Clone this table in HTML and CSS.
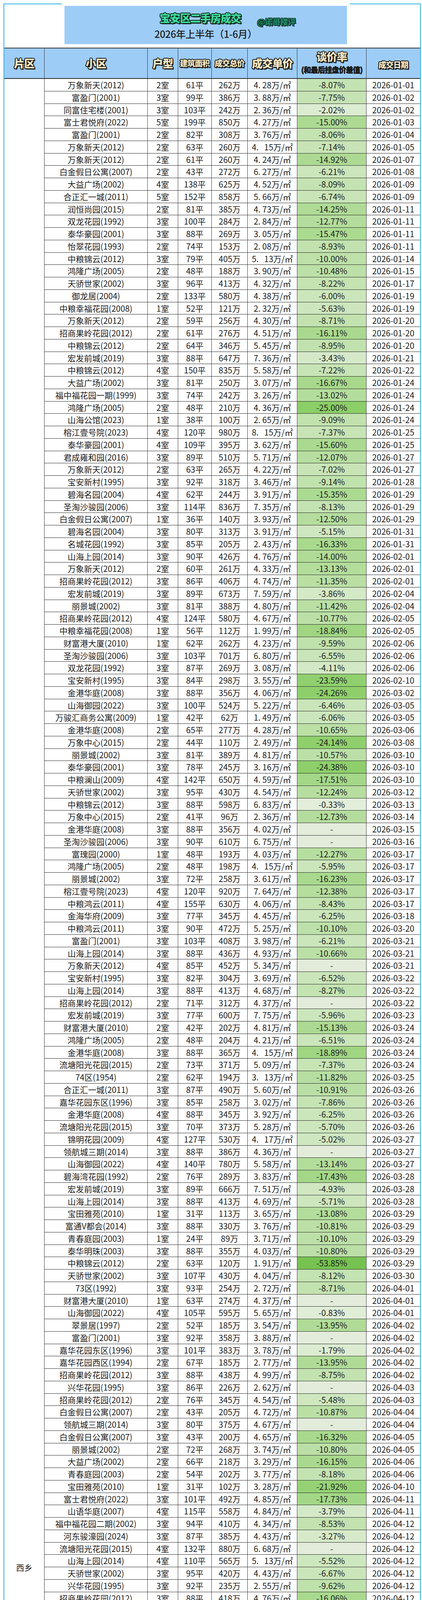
FILE: index.html
```html
<!DOCTYPE html>
<html lang="zh-CN">
<head>
<meta charset="utf-8">
<title>宝安区二手房成交 2026年上半年（1-6月）</title>
<link rel="stylesheet" href="styles.css">
</head>
<body>
<div class="frame">
  <header class="title-area">
    <div class="title-box">
      <div class="title-line">
        <h1 class="main-title">宝安区二手房成交</h1>
        <span class="handle">@诺哥楼评</span>
      </div>
      <div class="period">2026年上半年（1-6月）</div>
    </div>
  </header>
  <table class="sheet">
    <colgroup>
      <col class="c-area">
      <col class="c-name">
      <col class="c-room">
      <col class="c-size">
      <col class="c-total">
      <col class="c-unit">
      <col class="c-rate">
      <col class="c-date">
    </colgroup>
    <thead>
      <tr class="head">
        <th><div class="hc h-big">片区</div></th>
        <th><div class="hc h-big">小区</div></th>
        <th><div class="hc h-big">户型</div></th>
        <th><div class="hc h-small">建筑面积</div></th>
        <th><div class="hc h-small">成交总价</div></th>
        <th><div class="hc h-big">成交单价</div></th>
        <th><div class="hc h-rate"><span class="h-rate-t">谈价率</span><span class="h-note">(和最后挂盘价差值)</span></div></th>
        <th><div class="hc h-small h-date">成交日期</div></th>
      </tr>
    </thead>
    <tbody id="rows"></tbody>
  </table>
</div>
<script src="app.js"></script>
</body>
</html>
```

FILE: styles.css
```css
* { box-sizing: border-box; }

body {
  margin: 0;
  background: #ffffff;
  font-family: "Noto Sans CJK SC", "Noto Sans", "Liberation Sans", sans-serif;
  color: #1c1c1c;
}

.frame {
  margin: 9px 0 0 9px;
  width: 1068px;
  border: 2px solid #2fb3e6;
  background: #ffffff;
}

/* ---------- title ---------- */
.title-area {
  height: 111px;
  padding: 4px 0 0 154px;
}

.title-box {
  width: 723px;
  height: 98px;
  background: #9dcdf7;
  box-shadow: 0 0 0 7px #ffffff;
  padding-top: 13px;
  display: flex;
  flex-direction: column;
  align-items: stretch;
}

.title-line {
  display: flex;
  justify-content: center;
  align-items: flex-end;
  gap: 41px;
  padding-left: 112px;
}

.main-title {
  margin: 0;
  font-size: 27px;
  line-height: 36px;
  font-weight: 900;
  letter-spacing: -1px;
  white-space: nowrap;
  color: #3fdc9e;
  text-shadow:
    -1.5px -1.5px 0 #10261e, 1.5px -1.5px 0 #10261e,
    -1.5px 1.5px 0 #10261e, 1.5px 1.5px 0 #10261e,
    0 -2px 0 #10261e, 0 2px 0 #10261e, -2px 0 0 #10261e, 2px 0 0 #10261e,
    3px 3px 0 #10261e;
}

.handle {
  font-size: 20px;
  line-height: 24px;
  font-weight: 900;
  letter-spacing: -0.5px;
  white-space: nowrap;
  color: #1f8a68;
  text-shadow:
    -1px -1px 0 #10261e, 1px -1px 0 #10261e,
    -1px 1px 0 #10261e, 1px 1px 0 #10261e,
    2px 2px 0 #10261e;
  margin-bottom: -4px;
}

.period {
  margin-top: 6px;
  text-align: center;
  font-size: 25px;
  line-height: 32px;
  font-weight: 500;
  color: #1e1e1e;
  letter-spacing: -0.5px;
}

/* ---------- table ---------- */
.sheet {
  width: 100%;
  border-collapse: separate;
  border-spacing: 0;
  table-layout: fixed;
}

.c-area { width: 102px; }
.c-name { width: 264px; }
.c-room { width: 78px; }
.c-size { width: 86px; }
.c-total { width: 92px; }
.c-unit { width: 127px; }
.c-rate { width: 177px; }
.c-date { width: 138px; }

.head th {
  padding: 0;
  background: #9dcdf7;
  border-top: 2px solid #3a3a3a;
  border-bottom: 2px solid #2a2a2a;
  border-left: 1px solid #333333;
  text-align: center;
  vertical-align: middle;
  white-space: nowrap;
  font-weight: 900;
  color: #f7e8c3;
  text-shadow:
    -1.5px -1.5px 0 #161616, 1.5px -1.5px 0 #161616,
    -1.5px 1.5px 0 #161616, 1.5px 1.5px 0 #161616,
    0 -2px 0 #161616, 0 2px 0 #161616, -2px 0 0 #161616, 2px 0 0 #161616,
    2.5px 2.5px 0 #161616;
}

.head th:first-child { border-left: none; }

.hc {
  height: 76px;
  display: flex;
  flex-direction: column;
  align-items: center;
  justify-content: center;
}

.h-big {
  font-size: 27px;
  line-height: 34px;
  letter-spacing: -1px;
}

.h-small {
  font-size: 20px;
  line-height: 26px;
  letter-spacing: -1px;
}

.h-date { padding-top: 8px; }

.h-rate-t {
  display: block;
  font-size: 27px;
  line-height: 32px;
  letter-spacing: -1px;
  margin-top: -6px;
}

.h-note {
  display: block;
  margin-top: 6px;
  font-size: 19px;
  line-height: 22px;
  letter-spacing: -1px;
  color: #1e1e1e;
  text-shadow: 0.5px 0 0 #1e1e1e, 0 0.5px 0 #1e1e1e;
}

.sheet td {
  padding: 0;
  font-size: 21px;
  line-height: 30.75px;
  text-align: center;
  vertical-align: middle;
  white-space: nowrap;
  overflow: hidden;
  border-left: 1px solid #383838;
  border-bottom: 1px solid #2a2a2a;
  color: #1c1c1c;
}

.sheet td.area {
  border-left: none;
  border-bottom: none;
  background: #ffffff;
}

.sheet td.unit { white-space: pre; }

.sheet td.rate.none { background: #e3ecdb; }
```

FILE: app.js
```js
const DATA = `万象新天(2012),2,61,262,4.28,8.07,01-01
富盈门(2001),3,99,386,3.88,7.75,01-02
同富住宅楼(2001),3,103,242,2.36,2.02,01-02
富士君悦府(2022),5,199,850,4.27,15.00,01-03
富盈门(2001),2,82,308,3.76,8.06,01-04
万象新天(2012),2,63,260,4.15*,7.14,01-05
万象新天(2012),2,61,260,4.24,14.92,01-07
白金假日公寓(2007),2,43,272,6.27,6.21,01-08
大益广场(2002),4,138,625,4.52,8.09,01-09
合正汇一城(2011),5,152,858,5.66,6.74,01-09
润恒尚园(2015),2,81,385,4.73,14.25,01-11
双龙花园(1992),3,100,284,2.84,12.77,01-11
泰华豪园(2001),3,88,269,3.05,15.47,01-11
怡翠花园(1993),2,74,153,2.08,8.93,01-11
中粮锦云(2012),3,79,405,5.13*,10.00,01-14
鸿隆广场(2005),2,48,188,3.90,10.48,01-15
天骄世家(2002),3,96,413,4.32,8.22,01-17
御龙居(2004),2,133,580,4.38,6.00,01-19
中粮幸福花园(2008),1,52,121,2.32,5.63,01-19
万象新天(2012),2,59,256,4.30,8.71,01-20
招商果岭花园(2012),2,61,276,4.51,16.11,01-20
中粮锦云(2012),2,64,346,5.45,8.95,01-20
宏发前城(2019),3,88,647,7.36,3.43,01-21
中粮锦云(2012),4,150,835,5.58,7.22,01-22
大益广场(2002),3,81,250,3.07,16.67,01-24
福中福花园一期(1999),3,74,242,3.26,13.02,01-24
鸿隆广场(2005),2,48,210,4.36,25.00,01-24
山海公馆(2023),1,38,100,2.65,9.09,01-24
榕江壹号院(2023),4,120,980,8.15*,7.37,01-25
泰华豪园(2001),4,109,395,3.62,15.60,01-25
君成雍和园(2016),3,89,510,5.71,12.07,01-27
万象新天(2012),2,63,265,4.22,7.02,01-27
宝安新村(1995),3,92,318,3.46,9.14,01-28
碧海名园(2004),4,62,244,3.91,15.35,01-29
圣淘沙骏园(2006),3,114,836,7.35,8.13,01-29
白金假日公寓(2007),1,36,140,3.93,12.50,01-29
碧海名园(2004),3,80,313,3.91,5.15,01-31
名城花园(1992),3,85,205,2.43,16.33,01-31
山海上园(2014),3,90,426,4.76,14.00,02-01
万象新天(2012),2,60,261,4.33,13.13,02-01
招商果岭花园(2012),3,86,406,4.74,11.35,02-01
宏发前城(2019),3,89,673,7.59,3.86,02-04
丽景城(2002),3,81,388,4.80,11.42,02-04
招商果岭花园(2012),4,124,580,4.67,10.77,02-05
中粮幸福花园(2008),1,56,112,1.99,18.84,02-05
财富港大厦(2010),1,62,262,4.23,9.59,02-06
圣淘沙骏园(2006),3,103,701,6.80,6.55,02-06
双龙花园(1992),3,87,269,3.08,4.11,02-06
宝安新村(1995),3,84,298,3.55,23.59,02-10
金港华庭(2008),3,88,356,4.06,24.26,03-02
山海御园(2022),3,100,524,5.22,6.46,03-05
万骏汇商务公寓(2009),1,42,62,1.49,6.06,03-05
金港华庭(2008),2,65,277,4.28,10.65,03-06
万象中心(2015),2,44,110,2.49,24.14,03-08
丽景城(2002),3,81,389,4.81,10.57,03-10
泰华豪园(2001),3,78,245,3.16,24.38,03-10
中粮澜山(2009),4,142,650,4.59,17.51,03-10
天骄世家(2002),3,95,430,4.54,12.24,03-12
中粮锦云(2012),3,88,598,6.83,0.33,03-13
万象中心(2015),2,41,96,2.36,12.73,03-14
金港华庭(2008),3,88,356,4.02,,03-15
圣淘沙骏园(2006),3,90,610,6.75,,03-16
富瑰园(2000),1,48,193,4.03,12.27,03-17
鸿隆广场(2005),2,48,198,4.15*,5.95,03-17
丽景城(2002),3,72,258,3.61,16.23,03-17
榕江壹号院(2023),4,120,920,7.64,12.38,03-17
中粮鸿云(2011),4,155,630,4.06,8.43,03-17
金海华府(2009),3,77,345,4.45,6.25,03-18
中粮鸿云(2011),3,90,472,5.25,10.10,03-20
富盈门(2001),3,103,408,3.98,6.21,03-21
山海上园(2014),3,88,436,4.93,10.66,03-21
万象新天(2012),4,85,452,5.34,,03-21
宝安新村(1995),3,82,304,3.69,6.52,03-22
山海上园(2014),3,88,413,4.68,8.27,03-22
招商果岭花园(2012),2,71,312,4.37,,03-22
宏发前城(2019),3,77,600,7.75,5.96,03-23
财富港大厦(2010),2,42,202,4.81,15.13,03-24
鸿隆广场(2005),2,48,204,4.21,6.51,03-24
金港华庭(2008),3,88,365,4.15*,18.89,03-24
流塘阳光花园(2015),2,73,371,5.09,7.37,03-24
74区(1954),2,62,194,3.13*,11.82,03-25
合正汇一城(2011),3,87,490,5.60,10.91,03-26
嘉华花园东区(1996),3,85,258,3.02,7.86,03-26
金港华庭(2008),4,88,345,3.92,6.25,03-26
流塘阳光花园(2015),3,70,373,5.28,5.70,03-26
锦明花园(2009),4,127,530,4.17*,5.02,03-27
领航城三期(2014),3,88,386,4.36,,03-27
山海御园(2022),4,140,780,5.58,13.14,03-27
碧海湾花园(1992),2,76,289,3.83,17.43,03-28
宏发前城(2019),3,89,666,7.51,4.93,03-28
山海上园(2014),3,88,413,4.69,5.71,03-28
宝田雅苑(2010),1,31,113,3.65,13.08,03-29
富通V都会(2014),3,88,330,3.76,10.81,03-29
青春庭园(2003),1,24,89,3.71,10.10,03-29
泰华明珠(2003),3,88,355,4.03,10.80,03-29
中粮锦云(2012),2,63,120,1.91,53.85,03-29
天骄世家(2002),3,107,430,4.04,8.12,03-30
73区(1992),3,93,254,2.72,8.71,04-01
财富港大厦(2010),1,63,274,4.37,,04-01
山海御园(2022),4,105,595,5.65,0.83,04-01
翠景居(1997),2,52,185,3.54,13.95,04-02
富盈门(2001),3,92,358,3.88,,04-02
嘉华花园东区(1996),3,101,383,3.78,1.79,04-02
嘉华花园西区(1994),2,67,185,2.77,13.95,04-02
招商果岭花园(2012),3,88,438,4.99,8.75,04-02
兴华花园(1995),3,86,226,2.62,,04-03
招商果岭花园(2012),2,76,345,4.54,5.48,04-03
白金假日公寓(2007),2,43,205,4.72,10.87,04-04
领航城三期(2014),3,80,375,4.67,,04-04
白金假日公寓(2007),3,43,200,4.65,16.32,04-05
丽景城(2002),2,72,268,3.74,10.80,04-05
大益广场(2002),2,66,218,3.29,16.15,04-06
青春庭园(2003),2,54,202,3.77,8.18,04-06
宝田雅苑(2010),1,31,102,3.28,21.92,04-10
富士君悦府(2022),3,101,492,4.85,17.73,04-11
山语华庭(2007),4,115,558,4.84,3.79,04-11
福中福花园二期(2002),3,94,410,4.34,8.53,04-12
河东骏濠园(2024),3,87,385,4.43,3.27,04-12
流塘阳光花园(2015),4,132,880,6.68,,04-12
山海上园(2014),4,110,565,5.13*,5.52,04-12
天骄世家(2002),3,95,420,4.43,6.67,04-12
兴华花园(1995),3,92,235,2.55,9.62,04-12
招商果岭花园(2012),3,88,418,4.76,16.06,04-12
招商果岭花园(2012),2,71,330,4.62,5.71,04-12
73区(1992),3,83,230,2.76,,04-14
海峦坊(2023),3,97,528,5.47,5.71,04-14
宏发前城(2019),3,89,662,7.47,,04-14
山海御园(2022),3,96,500,5.22,3.94,04-14
金港华庭(2008),3,88,355,4.02,5.28,04-16
康达尔山海上城(2014),4,85,508,5.95,5.93,04-16
招商果岭花园(2012),2,61,284,4.64,13.94,04-16
万骏汇商务公寓(2009),1,41,62,1.52,4.62,04-17
中熙香缇湾(2009),5,89,605,6.78,5.47,04-17
天骄世家(2002),3,95,418,4.41,14.69,04-18
天骄世家(2002),3,72,282,3.91,9.62,04-18
丽景城(2002),3,97,358,3.70,12.68,04-19
白金假日公寓(2007),2,40,190,4.73,12.84,04-20
宝安新村(1995),3,89,312,3.51,15.22,04-20
招商果岭花园(2012),3,88,406,4.62,30.05,04-20
泰华明珠(2003),3,100,373,3.74,11.19,04-21
万象中心(2015),2,50,143,2.83,28.50,04-21
金港华庭(2008),2,63,267,4.20,15.33,04-22
双龙花园(1992),3,96,275,2.85,7.09,04-22
白金假日公寓(2007),3,41,208,5.09,4.59,04-23
白金假日公寓(2007),2,43,235,5.41,,04-23
宝田雅苑(2010),1,31,115,3.71,14.81,04-23
天骄世家(2002),4,164,680,4.14*,10.53,04-23
君成雍和园(2016),4,139,755,5.43,5.63,04-24
流塘阳光花园(2015),2,50,180,3.57,3.23,04-24
富通V都会(2014),3,88,330,3.76,10.81,04-25
丽景城(2002),3,101,515,5.09,3.92,04-25
鸣乐中心(1992),3,105,240,2.29,7.69,04-25
山语华庭(2007),4,140,710,5.05,9.55,04-25
双龙花园(1992),2,87,218,2.50,18.66,04-25
招商果岭花园(2012),3,88,408,4.64,9.33,04-25
大益广场(2002),2,68,238,3.49,14.39,04-26
山海上园(2014),3,89,450,5.05,10.00,04-26
天骄世家(2002),3,96,400,4.15*,10.11,04-26
富通蟠龙居(2002),2,73,295,4.03,10.06,04-27
富盈门(2001),2,80,330,4.15*,5.71,04-27
天骄世家(2002),3,107,425,3.97,9.23,04-28
榕江壹号院(2023),4,120,914,7.62,8.62,04-29
山海御园(2022),3,99,517,5.22,2.55,04-29
金港华庭(2008),3,87,394,4.53,,05-01
鸣乐中心(1992),2,71,179,2.53,5.79,05-01
山语华庭(2007),3,115,534,4.63,7.95,05-01
招商果岭花园(2012),2,53,238,4.47,10.19,05-01
丽景城(2002),3,81,400,4.95,11.11,05-02
圣淘沙骏园(2006),4,128,896,7.02,6.67,05-03
锦明花园(2009),4,153,635,4.15*,16.45,05-04
宝兴花园(1997),3,82,227,2.76,7.43,05-04
海峦坊(2023),3,97,515,5.33,6.02,05-05
双龙花园(1992),2,71,199,2.81,8.72,05-05
招商果岭花园(2012),2,70,337,4.78,5.87,05-05
锦明花园(2009),3,127,543,4.29,12.14,05-06
天骄世家(2002),3,97,422,4.35,5.17,05-06
招商果岭花园(2012),2,61,285,4.66,8.06,05-06
中粮锦云(2012),2,64,375,5.90,,05-06
大益广场(2002),3,91,280,3.08,12.50,05-07
中熙香缤山(2014),4,79,410,5.19*,8.69,05-07
丽景城(2002),4,132,553,4.18*,7.83,05-09
中粮幸福花园(2008),2,40,208,5.20,3.26,05-09
宏发前城(2019),3,75,609,8.15*,6.31,05-10
山海御园(2022),3,98,497,5.07,12.65,05-10
财富港大厦(2010),1,62,275,4.40,5.17,05-11
天骄世家(2002),3,96,416,4.31,7.56,05-11
天骄世家(2002),2,77,309,4.01,8.73,05-11
宏发前城(2019),4,170,1280,7.55,,05-13
流塘阳光花园(2015),3,76,256,3.34,32.74,05-13
丽景城(2002),2,79,368,4.66,7.07,05-14
流塘阳光花园(2015),3,71,347,4.86,,05-14
宝安新村(1995),3,92,310,3.35,18.42,05-16
中熙香缤山(2014),4,85,459,5.39,18.13,05-16
73区(1992),3,77,203,2.64,10.96,05-17
流塘阳光花园(2015),2,63,300,4.80,9.09,05-17
中熙香缤山(2014),4,80,438,5.51,2.67,05-17
财富港大厦(2010),2,62,285,4.60,10.94,05-18
榕江壹号院(2023),4,120,950,7.89,4.81,05-18
财富港大厦(2010),2,62,289,4.63,3.02,05-20
名城花园(1992),2,79,185,2.35,13.95,05-20
金港华庭(2008),3,87,362,4.16*,9.07,05-21
山海上园(2014),3,88,410,4.65,12.39,05-21
碧海名园(2004),3,76,294,3.87,17.18,05-24
君成雍和园(2016),4,89,523,5.89,4.56,05-24
万象中心(2015),2,44,114,2.58,26.45,05-25
财富港大厦(2010),2,42,207,4.92,3.77,05-26
翠景居(1997),2,85,264,3.11*,8.97,05-29
流塘阳光花园(2015),2,47,149,3.18*,40.48,05-30
流塘阳光花园(2015),2,48,149,3.10*,6.87,06-01
圣淘沙骏园(2006),3,76,505,6.69,7.34,06-01
福中福花园二期(2002),3,65,269,4.17*,9.73,06-02
福中福花园一期(1999),3,101,388,3.84,7.62,06-03
万象中心(2015),2,44,108,2.45,10.00,06-03
天骄世家(2002),3,80,330,4.12*,7.82,06-04
鸿隆广场(2005),2,48,183,3.84,15.07,06-05
圣淘沙骏园(2006),2,76,525,6.92,9.17,06-05
御龙居(2004),3,133,588,4.43,5.16,06-05
流塘阳光花园(2015),2,47,185,3.96,,06-07
万骏汇商务公寓(2009),1,45,61,1.36,1.61,06-07
招商果岭花园(2012),2,77,335,4.38,5.63,06-07
新安市场(1992),1,45,91,2.02,,06-08
翠景居(1997),3,83,275,3.32,8.94,06-09
金海华府(2009),3,83,428,5.18*,1.61,06-09
锦明花园(2009),4,120,636,5.30,20.50,06-12
金港华庭(2008),3,87,380,4.35,12.64,06-13
御龙居(2004),4,134,572,4.28,2.72,06-14
山海上园(2014),3,89,435,4.90,12.83,06-16
大益广场(2002),3,73,285,3.90,10.94,06-19
中粮幸福花园(2008),2,57,128,2.24,7.78,06-19
金海华府(2009),3,83,419,5.07,10.51,06-20
富通蟠龙居(2002),3,101,398,3.94,10.56,06-21
碧海名园(2004),2,61,228,3.72,21.38,06-23
流塘阳光花园(2015),2,47,149,3.20,6.87,06-23
宝安新村(1995),3,92,320,3.46,10.61,06-23
新安市场(1992),1,32,68,2.11*,5.56,06-27
中熙香缤山(2014),4,89,466,5.25,6.90,06-27
财富港大厦(2010),2,62,275,4.40,5.17,06-28
名城花园(1992),3,81,179,2.21,17.18,06-28
金港华庭(2008),2,64,268,4.19*,10.07,06-30
金港华庭(2008),4,119,499,4.18*,9.27,06-30`;

function mix(a, b, t) {
  return a.map((v, i) => Math.round(v + (b[i] - v) * t));
}

function rateColor(v) {
  const c0 = [228, 239, 220];
  const c1 = [140, 206, 104];
  const c2 = [118, 194, 80];
  let c;
  if (v <= 25) {
    c = mix(c0, c1, Math.pow(v / 25, 0.9));
  } else {
    c = mix(c1, c2, Math.min(1, (v - 25) / 29));
  }
  return `rgb(${c[0]}, ${c[1]}, ${c[2]})`;
}

function formatUnit(u) {
  const odd = u.endsWith('*');
  const s = odd ? u.slice(0, -1) : u;
  const [ip, fp] = s.split('.');
  return ip + '.' + (odd ? '   ' : ' ') + fp + '万/㎡';
}

function cell(text, cls) {
  const td = document.createElement('td');
  td.textContent = text;
  if (cls) td.className = cls;
  return td;
}

const tbody = document.getElementById('rows');
const lines = DATA.trim().split('\n');

lines.forEach((line, i) => {
  const [name, rooms, size, total, unit, rate, date] = line.split(',');
  const tr = document.createElement('tr');
  if (i === 0) {
    const area = cell('西乡', 'area');
    area.rowSpan = lines.length;
    tr.appendChild(area);
  }
  tr.appendChild(cell(name, 'name'));
  tr.appendChild(cell(rooms + '室'));
  tr.appendChild(cell(size + '平'));
  tr.appendChild(cell(total + '万'));
  tr.appendChild(cell(formatUnit(unit), 'unit'));
  if (rate === '') {
    tr.appendChild(cell('-', 'rate none'));
  } else {
    const td = cell('-' + rate + '%', 'rate');
    td.style.background = rateColor(parseFloat(rate));
    tr.appendChild(td);
  }
  tr.appendChild(cell('2026-' + date));
  tbody.appendChild(tr);
});
```
